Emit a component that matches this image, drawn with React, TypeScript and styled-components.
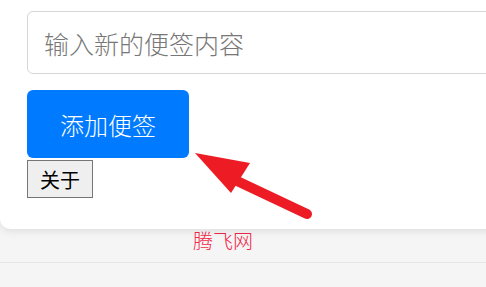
import styled, { createGlobalStyle } from "styled-components";

const GlobalStyle = createGlobalStyle`
  html, body {
    margin: 0;
    padding: 0;
    overflow: hidden;
    background: #f5f5f5;
    font-family: "Noto Sans", "Noto Sans CJK SC", sans-serif;
  }
`;

export default function App() {
  return (
    <Page>
      <GlobalStyle />
      <Card>
        <NoteInput placeholder="输入新的便签内容" />
        <AddButton>添加便签</AddButton>
        <AboutButton>关于</AboutButton>
        <Arrow width="130" height="80" viewBox="0 0 130 80">
          <line
            x1="40"
            y1="30"
            x2="112"
            y2="64"
            stroke="#ed1c24"
            strokeWidth="10"
            strokeLinecap="round"
          />
          <polygon points="0,3 55,13 36,43" fill="#ed1c24" />
        </Arrow>
      </Card>
      <Footer>
        <FooterText>腾飞网</FooterText>
      </Footer>
    </Page>
  );
}

const Page = styled.div`
  width: 486px;
  height: 287px;
  overflow: hidden;
`;

const Card = styled.div`
  position: relative;
  box-sizing: border-box;
  width: 540px;
  padding: 11px 27px 31px;
  background: #fff;
  border-radius: 0 0 10px 10px;
  box-shadow: 0 2px 8px rgba(0, 0, 0, 0.1);
  display: flex;
  flex-direction: column;
  align-items: flex-start;
`;

const NoteInput = styled.input`
  box-sizing: border-box;
  width: 100%;
  height: 63px;
  padding: 0 16px;
  border: 1px solid #d6d6d6;
  border-radius: 6px;
  font-family: "Noto Sans CJK SC", sans-serif;
  font-size: 25px;
  font-weight: 300;
  color: #333;
  outline: none;

  &::placeholder {
    color: #777;
  }
`;

const AddButton = styled.button`
  margin-top: 16px;
  width: 162px;
  height: 68px;
  border: none;
  border-radius: 6px;
  background: #007bff;
  color: #fff;
  font-family: "Noto Sans CJK SC", sans-serif;
  font-size: 24px;
  font-weight: 300;
  padding: 0;
`;

const AboutButton = styled.button`
  margin-top: 2px;
  box-sizing: border-box;
  width: 66px;
  height: 38px;
  padding: 0;
  border: 1px solid #767676;
  border-radius: 0;
  background: #efefef;
  color: #000;
  font-family: "Noto Sans CJK SC", sans-serif;
  font-size: 20px;
`;

const Arrow = styled.svg`
  position: absolute;
  left: 195px;
  top: 150px;
`;

const Footer = styled.div`
  height: 33px;
  border-bottom: 1px solid #e6e6e6;
  padding-left: 193px;
`;

const FooterText = styled.span`
  display: inline-block;
  margin-top: -1px;
  font-family: "Noto Sans CJK SC", sans-serif;
  font-size: 20px;
  font-weight: 300;
  line-height: 26px;
  color: #f0284a;
`;
